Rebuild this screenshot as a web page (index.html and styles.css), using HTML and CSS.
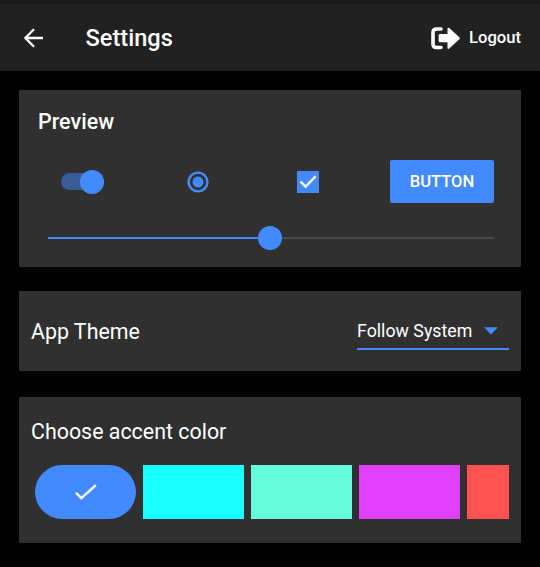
FILE: index.html
```html
<!DOCTYPE html>
<html lang="en">
<head>
<meta charset="utf-8">
<title>Settings</title>
<link rel="stylesheet" href="styles.css">
</head>
<body>
<header class="bar">
  <svg class="back" viewBox="0 0 20 20"><path d="M19 10H1.8M10 1.2 1.4 10 10 18.8"/></svg>
  <h1 class="title">Settings</h1>
  <svg class="exit" viewBox="0 0 29 23"><path class="frame" d="M10 2H5.5Q2 2 2 5.5v11.5Q2 20.5 5.5 20.5H10"/><path class="arrow" d="M9 7h7.5V1.5Q17 0 18.3 1.1L28.3 10.2q1 1 0 2l-10 9.3q-1.3 1-1.8-.6V15.3H9Q7.7 15.3 7.7 14V8.3Q7.7 7 9 7z"/></svg>
  <span class="logout">Logout</span>
</header>
<main class="cards">
  <section class="card preview">
    <h2 class="heading">Preview</h2>
    <div class="controls">
      <span class="switch"><span class="knob"></span></span>
      <svg class="radio" viewBox="0 0 22 22"><circle class="ring" cx="11" cy="11" r="9.4"/><circle class="dot" cx="11" cy="11" r="5.5"/></svg>
      <span class="check"><svg viewBox="0 0 22 22"><path d="M3.6 10.6 8.6 15.6 18.6 5.4"/></svg></span>
      <button class="button">BUTTON</button>
    </div>
    <div class="slider"><span class="filled"></span><span class="thumb"></span><span class="rest"></span></div>
  </section>
  <section class="card theme">
    <span class="label">App Theme</span>
    <div class="select"><span>Follow System</span><svg viewBox="0 0 14 8"><path d="M0 .3h14L7 7.5z"/></svg></div>
  </section>
  <section class="card accent">
    <div class="label">Choose accent color</div>
    <div class="swatches">
      <svg class="swatch blue" viewBox="0 0 101 54"><rect width="101" height="54" rx="27"/><path d="m41 27.8 5.4 5.4L60.8 20.2"/></svg>
      <svg class="swatch cyan" viewBox="0 0 101 54"><rect width="101" height="54"/></svg>
      <svg class="swatch teal" viewBox="0 0 101 54"><rect width="101" height="54"/></svg>
      <svg class="swatch purple" viewBox="0 0 101 54"><rect width="101" height="54"/></svg>
      <svg class="swatch red" viewBox="0 0 101 54"><rect width="101" height="54"/></svg>
    </div>
  </section>
</main>
</body>
</html>
```
FILE: styles.css
```css
* { box-sizing: border-box; }
body {
  margin: 0;
  height: 567px;
  overflow: hidden;
  background: #000;
  color: #fff;
  font-family: Roboto, sans-serif;
}
svg { display: block; flex: none; }
.bar {
  display: flex;
  align-items: center;
  height: 71px;
  padding: 0 19px 0 23.5px;
  border-top: 4px solid #1a1a1a;
  background: #212121;
}
.back { width: 20px; height: 20px; fill: none; stroke: #fff; stroke-width: 2.3; }
.title {
  margin: 0 0 0 42px;
  font-size: 23.6px;
  line-height: 28px;
  font-weight: 500;
}
.exit { width: 29px; height: 23px; margin: 2px 9.5px 0 auto; }
.frame { fill: none; stroke: #fff; stroke-width: 3.6; stroke-linecap: round; }
.arrow { fill: #fff; }
.logout { font-size: 16.6px; line-height: 20px; font-weight: 500; }
.cards { padding: 19px 19px 0; }
.card { background: #303030; }
.preview { height: 177px; padding: 18px 27px 0 19px; }
.heading { margin: 0; font-size: 21.5px; line-height: 28px; font-weight: 500; }
.controls { display: flex; align-items: center; height: 43px; margin-top: 24px; padding-left: 23px; }
.switch {
  display: flex;
  align-items: center;
  justify-content: flex-end;
  width: 43px;
  height: 17px;
  border-radius: 9px;
  background: #3a5c96;
}
.knob { width: 24px; height: 24px; border-radius: 50%; background: #448aff; flex: none; }
.radio { width: 22px; height: 22px; margin-left: 82.5px; }
.ring { fill: none; stroke: #448aff; stroke-width: 2.4; }
.dot { fill: #448aff; }
.check { width: 22px; height: 22px; margin-left: 88.5px; background: #448aff; }
.check path, .swatch path { fill: none; stroke: #fff; stroke-width: 2.4; }
.button {
  width: 104px;
  height: 43px;
  margin-left: auto;
  padding: 0;
  border: 0;
  border-radius: 2px;
  background: #448aff;
  color: #fff;
  font: 500 16.6px/43px Roboto, sans-serif;
}
.slider { display: flex; align-items: center; height: 24px; margin: 23px 0 0 9.5px; }
.filled { width: 210.5px; height: 2.5px; background: #448aff; }
.thumb { width: 24px; height: 24px; border-radius: 50%; background: #448aff; }
.rest { flex: 1; height: 2.5px; background: #4b4b4b; }
.theme {
  display: flex;
  align-items: center;
  justify-content: space-between;
  height: 80.4px;
  margin-top: 24px;
  padding: 0 12px;
}
.label { font-size: 21.4px; line-height: 28px; }
.theme .label { padding-top: 2px; }
.select {
  display: flex;
  align-items: center;
  width: 152px;
  height: 37px;
  margin-top: 1px;
  border-bottom: 2.5px solid #448aff;
  font-size: 17.8px;
}
.select svg { width: 14px; height: 8px; margin: 1px 0 0 12px; fill: #448aff; }
.accent { height: 146px; margin-top: 25.6px; padding: 21px 12px 0; }
.swatches { display: flex; gap: 7px; margin-top: 19px; padding-left: 3.5px; overflow: hidden; }
.swatch { flex: none; width: 101px; height: 54px; }
.blue { fill: #448aff; }
.cyan { fill: #18ffff; }
.teal { fill: #64ffda; }
.purple { fill: #e040fb; }
.red { fill: #ff5252; }
```
